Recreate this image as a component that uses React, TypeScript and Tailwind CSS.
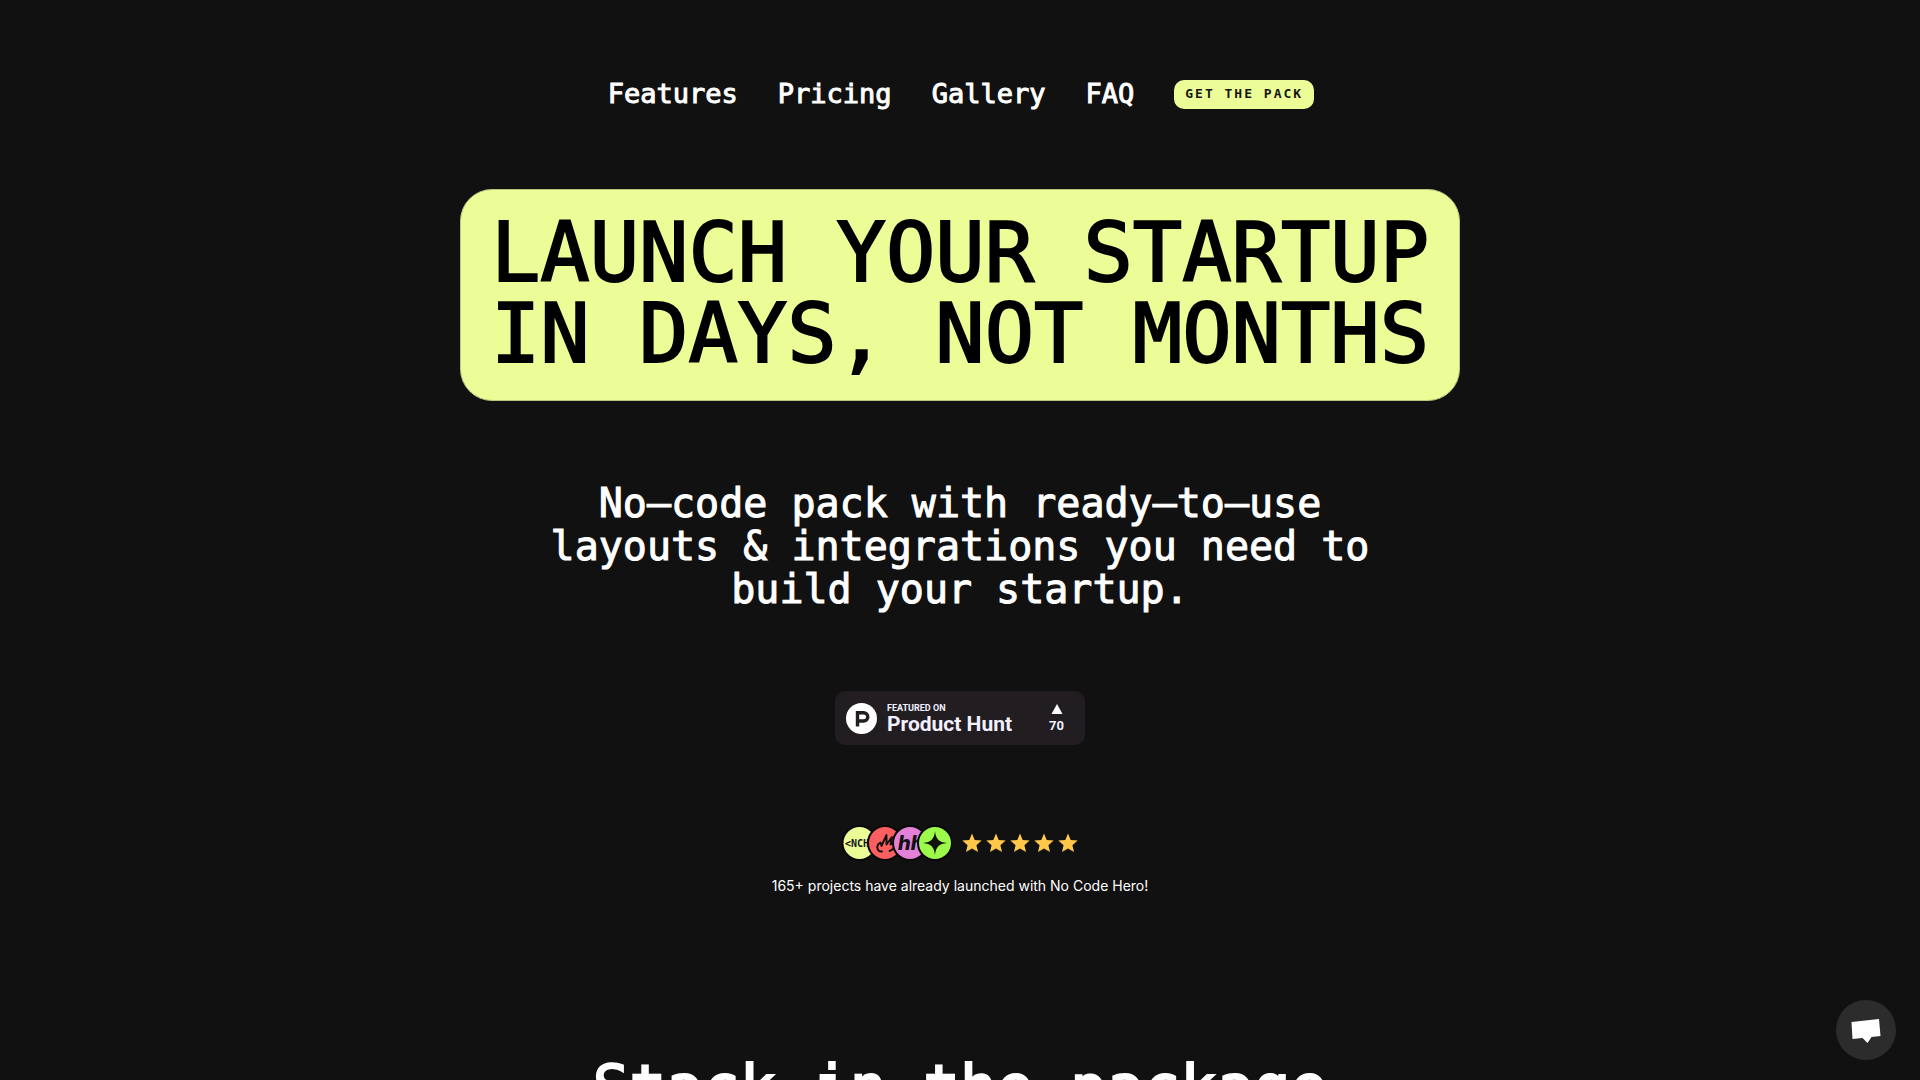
import React from 'react';

const NAV_LINKS = ['Features', 'Pricing', 'Gallery', 'FAQ'];

function Avatars() {
  return (
    <svg width="112" height="36" viewBox="0 0 112 36" role="img" aria-label="Customer projects">
      <defs>
        <clipPath id="c1"><circle cx="19.500" cy="18" r="16" /></clipPath>
        <clipPath id="c3"><circle cx="70" cy="18" r="16" /></clipPath>
      </defs>
      <circle cx="19.500" cy="18" r="17" fill="#ecfd97" stroke="#090909" strokeWidth="2" />
      <text x="5" y="22" clipPath="url(#c1)" fontFamily="DejaVu Sans Mono" fontSize="10" fontWeight="700" fill="#151515">&lt;NCH</text>
      <circle cx="45" cy="18" r="17" fill="#fb5f5f" stroke="#090909" strokeWidth="2" />
      <path d="M42 26.500C38 27 36 23 38 19.500L40.500 17.500 41.500 21 46.500 10 46.500 19.500 52 12 50.500 19.500 55 17.500C55 22 53 25 49.500 26" fill="none" stroke="#111" strokeWidth="1.9" strokeLinejoin="round" strokeLinecap="round" />
      <circle cx="70" cy="18" r="17" fill="#e381d9" stroke="#090909" strokeWidth="2" />
      <text x="58" y="25" clipPath="url(#c3)" fontFamily="Inter" fontSize="20" fontWeight="800" fontStyle="italic" fill="#111">hh</text>
      <circle cx="95" cy="18" r="17" fill="#9cfb4a" stroke="#090909" strokeWidth="2" />
      <path d="M95 6c.8 8 4 11.200 12 12-8 .8-11.200 4-12 12-.8-8-4-11.200-12-12 8-.8 11.200-4 12-12z" fill="#111" />
    </svg>
  );
}

function Star() {
  return (
    <svg width="24" height="24" viewBox="0 0 24 24" aria-hidden="true">
      <path d="M12 2.500l2.700 6.500 7 .6-5.300 4.600 1.600 6.800L12 17.400 6 21l1.600-6.800L2.300 9.600l7-.6z" fill="#ffc84a" />
    </svg>
  );
}

function ProductHuntBadge() {
  return (
    <a href="#product-hunt" className="mt-20 flex h-[54px] w-[250px] items-center rounded-[10px] bg-[#211d21] pr-[21px] pl-[11px] font-[Roboto,sans-serif] font-bold text-[#f3f0ff]">
      <svg width="31" height="31" viewBox="0 0 31 31" aria-hidden="true">
        <circle cx="15.500" cy="15.500" r="15.500" fill="#fff" />
        <path d="M11.500 23.500V9.800h6.200a4 4 0 0 1 0 8.200h-6" fill="none" stroke="#211d21" strokeWidth="3.4" />
      </svg>
      <span className="ml-[10px] flex flex-col pt-px">
        <span className="text-[9px] leading-[11px]">FEATURED ON</span>
        <span className="text-[21px] leading-[21px]">Product Hunt</span>
      </span>
      <span className="ml-auto flex flex-col items-center gap-[4px] pt-[2px]">
        <svg width="12" height="10" viewBox="0 0 12 10" aria-hidden="true"><path d="M6 0l5.500 10H.5z" fill="#fff" /></svg>
        <span className="text-[13px] leading-[16px]">70</span>
      </span>
    </a>
  );
}

export default function App() {
  return (
    <div className="h-screen overflow-hidden bg-[#111111] font-['DejaVu_Sans_Mono',monospace] text-white">
      <header className="flex justify-center pt-[78px]">
        <nav className="flex items-center gap-10 pl-0.5">
          {NAV_LINKS.map((label) => (
            <a key={label} href={'#' + label.toLowerCase()} className="text-[27px] leading-8 [-webkit-text-stroke:1px_white]">
              {label}
            </a>
          ))}
          <button type="button" className="h-[29px] w-[140px] rounded-[10px] bg-[#ecfd97] text-[13px] leading-4 font-bold tracking-[2px] whitespace-nowrap text-[#151515]">
            GET THE PACK
          </button>
        </nav>
      </header>

      <main className="flex flex-col items-center">
        <div className="mt-[79px] flex h-[212px] w-full max-w-[1000px] justify-center rounded-[32px] border border-[#b9c47c] bg-[#ecfd97] pt-[22px]">
          <h1 className="text-center text-[82px] leading-[81px] text-black [-webkit-text-stroke:2px_black]">
            LAUNCH YOUR STARTUP
            <br />
            IN DAYS, NOT MONTHS
          </h1>
        </div>

        <p className="mt-[81px] max-w-[840px] text-center text-[40px] leading-[43px] [-webkit-text-stroke:1px_white]">
          No–code pack with ready–to–use layouts &amp; integrations you need to build your startup.
        </p>

        <ProductHuntBadge />

        <div className="mt-20 flex items-center gap-2">
          <Avatars />
          <div className="flex" role="img" aria-label="Five stars">
            <Star />
            <Star />
            <Star />
            <Star />
            <Star />
          </div>
        </div>
        <p className="mt-[15px] font-[Inter,sans-serif] text-[14px] leading-5">
          165+ projects have already launched with No Code Hero!
        </p>

        <h2 className="mt-[159px] text-[61px] leading-[64px] [-webkit-text-stroke:2px_white]">Stack in the package</h2>
      </main>

      <button type="button" aria-label="Open chat" className="fixed right-6 bottom-5 flex h-[60px] w-[60px] items-center justify-center rounded-full bg-[#2c2c2c]">
        <svg width="30" height="26" viewBox="0 0 30 26" aria-hidden="true">
          <path d="M.5 5L28 2l1.500 17-9 1-4 6-5-5-10 1z" fill="#fff" />
        </svg>
      </button>
    </div>
  );
}
